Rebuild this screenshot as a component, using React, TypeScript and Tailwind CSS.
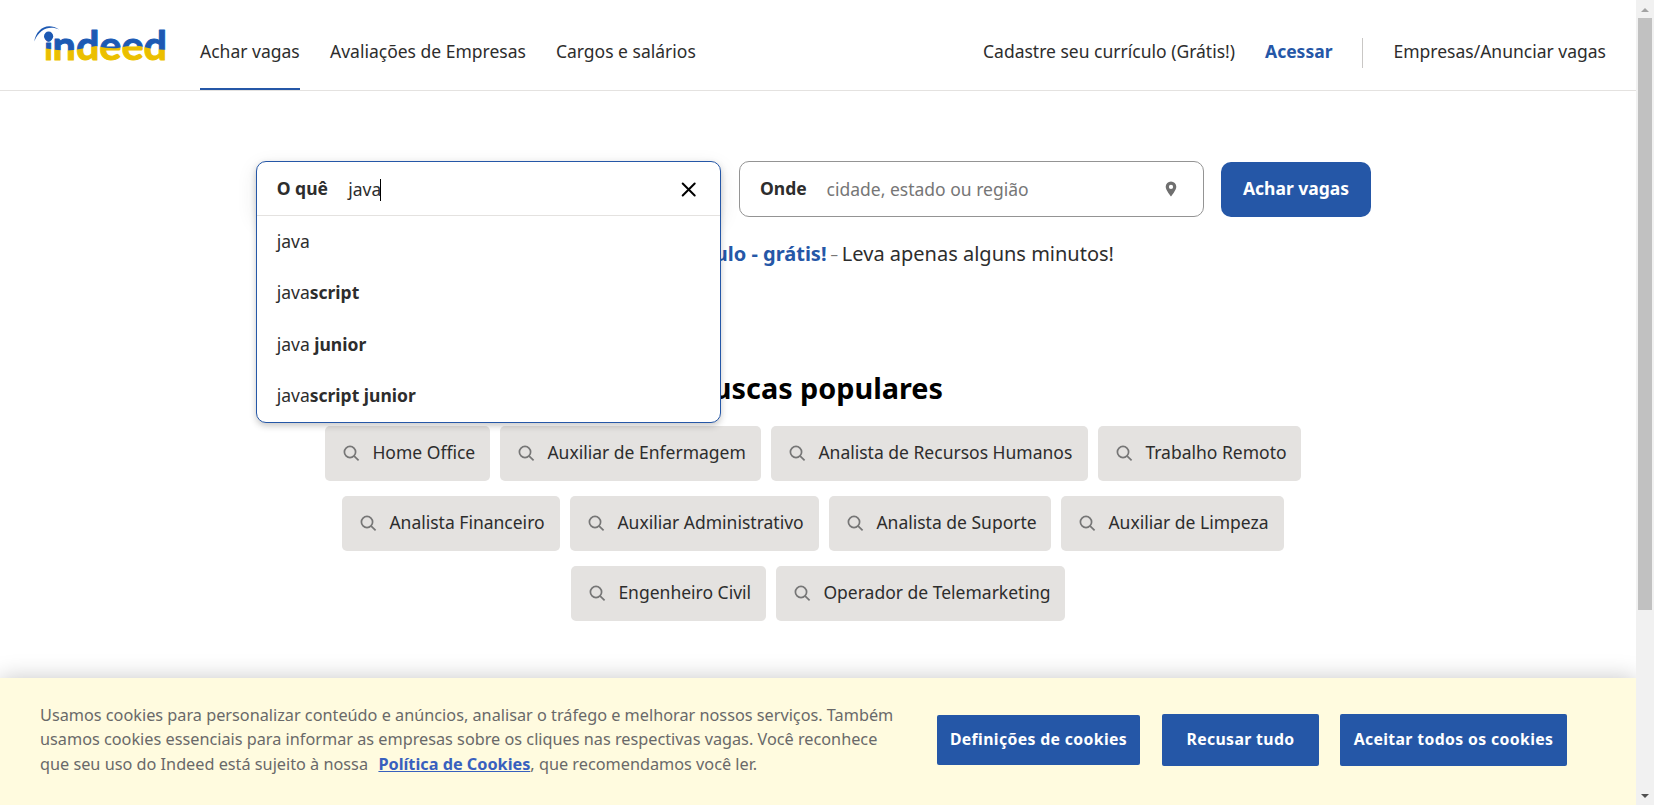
import { ReactNode } from "react";

const popularRows: { label: string; width: string }[][] = [
  [
    { label: "Home Office", width: "w-[165px]" },
    { label: "Auxiliar de Enfermagem", width: "w-[261px]" },
    { label: "Analista de Recursos Humanos", width: "w-[317px]" },
    { label: "Trabalho Remoto", width: "w-[203px]" },
  ],
  [
    { label: "Analista Financeiro", width: "w-[218px]" },
    { label: "Auxiliar Administrativo", width: "w-[249px]" },
    { label: "Analista de Suporte", width: "w-[222px]" },
    { label: "Auxiliar de Limpeza", width: "w-[223px]" },
  ],
  [
    { label: "Engenheiro Civil", width: "w-[195px]" },
    { label: "Operador de Telemarketing", width: "w-[289px]" },
  ],
];

const suggestions: [string, string][] = [
  ["java", ""],
  ["java", "script"],
  ["java", " junior"],
  ["java", "script junior"],
];

function Logo() {
  return (
    <svg width="140" height="66" viewBox="0 0 140 66" className="block shrink-0">
      <defs>
        <pattern id="flag" patternUnits="userSpaceOnUse" width="140" height="66">
          <rect width="140" height="66" fill="#1d59b3" />
          <path d="M0 28.5 L14 28.5 Q36 32 48 29 L64 26 Q78 29 86 28 Q102 24 112 27 Q122 30 140 30 V66 H0Z" fill="#ebbf00" />
        </pattern>
      </defs>
      <path d="M2.3 21.5C4 9.5 14.5 1.5 27.2 9.4C17.5 5.5 7.5 8.5 2.3 21.5Z" fill="#1d59b3" />
      <circle cx="16.6" cy="16.2" r="4.6" fill="#1d59b3" />
      <text
        y="39.5"
        fill="url(#flag)"
        stroke="url(#flag)"
        strokeWidth="1"
        strokeLinejoin="round"
        className="font-['Lato'] font-bold"
      >
        <tspan x="12.5" fontSize="31.5" strokeWidth="1.2">i</tspan>
        <tspan x="20.6" fontSize="41" textLength="114.4" lengthAdjust="spacingAndGlyphs">ndeed</tspan>
      </text>
    </svg>
  );
}

function SearchIcon() {
  return (
    <svg width="17" height="17" viewBox="0 0 17 17" fill="none" stroke="#767676" strokeWidth="1.7" className="shrink-0">
      <circle cx="7" cy="7" r="5.6" />
      <path d="M11.2 11.2L15.6 15.4" />
    </svg>
  );
}

function CookieButton({ size, children }: { size: string; children: ReactNode }) {
  return (
    <button className={`${size} shrink-0 rounded-[2px] bg-[#2557a7] text-[15.8px] font-bold tracking-[0.36px] whitespace-nowrap text-white`}>
      {children}
    </button>
  );
}

export default function App() {
  return (
    <div className="flex h-[805px] w-[1654px] overflow-hidden bg-white font-['Noto_Sans',sans-serif] text-[17.5px] text-[#2d2d2d]">
      <div className="flex h-full w-[1636px] shrink-0 flex-col overflow-hidden">
        <header className="flex h-[91px] shrink-0 border-b border-[#e4e2e0] pr-[30px] pl-8">
          <div className="mr-7 pt-5">
            <Logo />
          </div>
          <nav className="flex gap-[30px] leading-[24px]">
            <a className="h-[90px] w-[100px] border-b-2 border-[#2557a7] pt-[39px] whitespace-nowrap">Achar vagas</a>
            <a className="pt-[39px] whitespace-nowrap">Avaliações de Empresas</a>
            <a className="pt-[39px] whitespace-nowrap">Cargos e salários</a>
          </nav>
          <div className="ml-auto flex leading-[24px] whitespace-nowrap">
            <a className="pt-[39px]">Cadastre seu currículo (Grátis!)</a>
            <a className="ml-[30px] pt-[39px] font-bold text-[#2557a7]">Acessar</a>
            <div className="mt-[38px] mr-[30px] ml-[30px] h-[30px] w-px bg-[#c9c7c5]" />
            <a className="pt-[39px]">Empresas/Anunciar vagas</a>
          </div>
        </header>

        <main className="relative flex h-[587px] shrink-0 flex-col">
          <div className="flex pt-[70px] pl-64">
            <div className="relative z-10 h-14 w-[465px]">
              <div className="absolute inset-0 rounded-[10px] shadow-[0_6px_20px_rgba(45,45,45,0.10)]" />
              <div className="absolute inset-x-0 top-0 h-[262px] rounded-[10px] border border-[#2557a7] bg-white shadow-[0_3px_6px_rgba(45,45,45,0.25)]">
                <div className="flex h-[54px] items-center border-b border-[#e4e2e0] pr-[23px] pl-[19.7px]">
                  <label className="font-bold">O quê</label>
                  <span className="ml-[20.3px] flex items-center pt-[2px]">
                    java
                    <span className="-ml-px h-[22px] w-px bg-black" />
                  </span>
                  <svg width="16" height="16" viewBox="0 0 16 16" className="ml-auto" fill="none" stroke="#000" strokeWidth="2" strokeLinecap="round">
                    <path d="M1.7 2.5L13.7 14.5M13.7 2.5L1.7 14.5" />
                  </svg>
                </div>
                <ul className="-mt-[0.6px]">
                  {suggestions.map(([typed, rest]) => (
                    <li key={rest} className="flex h-[51.4px] items-center pl-[19.7px] whitespace-pre">
                      {typed}
                      <b className="font-bold">{rest}</b>
                    </li>
                  ))}
                </ul>
              </div>
            </div>
            <div className="ml-[18px] flex h-14 w-[465px] items-center rounded-[10px] border border-[#949494] pr-[26.5px] pb-[2px] pl-5">
              <label className="font-bold">Onde</label>
              <span className="ml-[19.8px] pt-[3px] text-[#767676]">cidade, estado ou região</span>
              <svg width="12" height="16" viewBox="0 0 12 16" className="mt-[2px] ml-auto" fill="#6f6f6f">
                <path fillRule="evenodd" d="M6 0.5A5.3 5.3 0 0 1 11.3 5.8C11.3 9.3 6 15.5 6 15.5S0.7 9.3 0.7 5.8A5.3 5.3 0 0 1 6 0.5ZM6 3.8a2.1 2.1 0 1 0 0 4.2a2.1 2.1 0 0 0 0-4.2Z" />
              </svg>
            </div>
            <button className="mt-px ml-[17px] h-[55px] w-[150px] rounded-[10px] bg-[#2557a7] pb-[2px] font-bold text-white">Achar vagas</button>
          </div>

          <p className="mt-[23px] mr-[522px] flex h-7 items-center justify-end text-[20px] whitespace-pre">
            <b className="text-[#2557a7]">Cadastre seu currículo - grátis!</b>
            <span className="text-[15px] text-[#767676]"> – </span>
            <span>Leva apenas alguns minutos!</span>
          </p>
          <h1 className="mt-[98px] mr-[693px] h-11 text-right text-[28.8px] leading-[44px] font-bold text-black">Buscas populares</h1>

          <div className="mt-4 flex flex-col gap-[15px]">
            {popularRows.map((row, r) => (
              <div key={r} className={`flex justify-center gap-[10px] ${r < 2 ? "pr-[10px]" : "pr-0"}`}>
                {row.map((item) => (
                  <a key={item.label} className={`${item.width} flex h-[55px] items-center rounded-[5px] bg-[#e4e2e0] pl-[18px] whitespace-nowrap`}>
                    <SearchIcon />
                    <span className="ml-[12.4px] pb-[2px]">{item.label}</span>
                  </a>
                ))}
              </div>
            ))}
          </div>
        </main>

        <footer className="flex h-[127px] shrink-0 bg-[#fffbdf] pl-10 shadow-[0_0_22px_rgba(0,0,0,0.22)]">
          <div className="w-[870px] pt-[25px] text-[16.25px] leading-[24.4px] whitespace-nowrap text-[#696969]">
            <p>Usamos cookies para personalizar conteúdo e anúncios, analisar o tráfego e melhorar nossos serviços. Também</p>
            <p>usamos cookies essenciais para informar as empresas sobre os cliques nas respectivas vagas. Você reconhece</p>
            <p>
              que seu uso do Indeed está sujeito à nossa
              <a className="ml-[10.4px] font-bold text-[#3860be] underline">Política de Cookies</a>, que recomendamos você ler.
            </p>
          </div>
          <div className="ml-[27px] flex h-[124px] items-center">
            <CookieButton size="h-[50px] w-[203px]">Definições de cookies</CookieButton>
            <div className="w-[22px]" />
            <CookieButton size="h-[52px] w-[157px]">Recusar tudo</CookieButton>
            <div className="w-[21px]" />
            <CookieButton size="h-[52px] w-[227px]">Aceitar todos os cookies</CookieButton>
          </div>
        </footer>
      </div>

      <div className="flex h-full w-[18px] shrink-0 flex-col items-center bg-[#f1f1f1]">
        <svg width="18" height="18" viewBox="0 0 18 18" fill="#a3a3a3" className="shrink-0">
          <path d="M5 12H13L9 8Z" />
        </svg>
        <div className="h-[592px] w-[14px] bg-[#c1c1c1]" />
        <svg width="18" height="18" viewBox="0 0 18 18" fill="#505050" className="mt-auto">
          <path d="M5 7H13L9 11Z" />
        </svg>
      </div>
    </div>
  );
}
